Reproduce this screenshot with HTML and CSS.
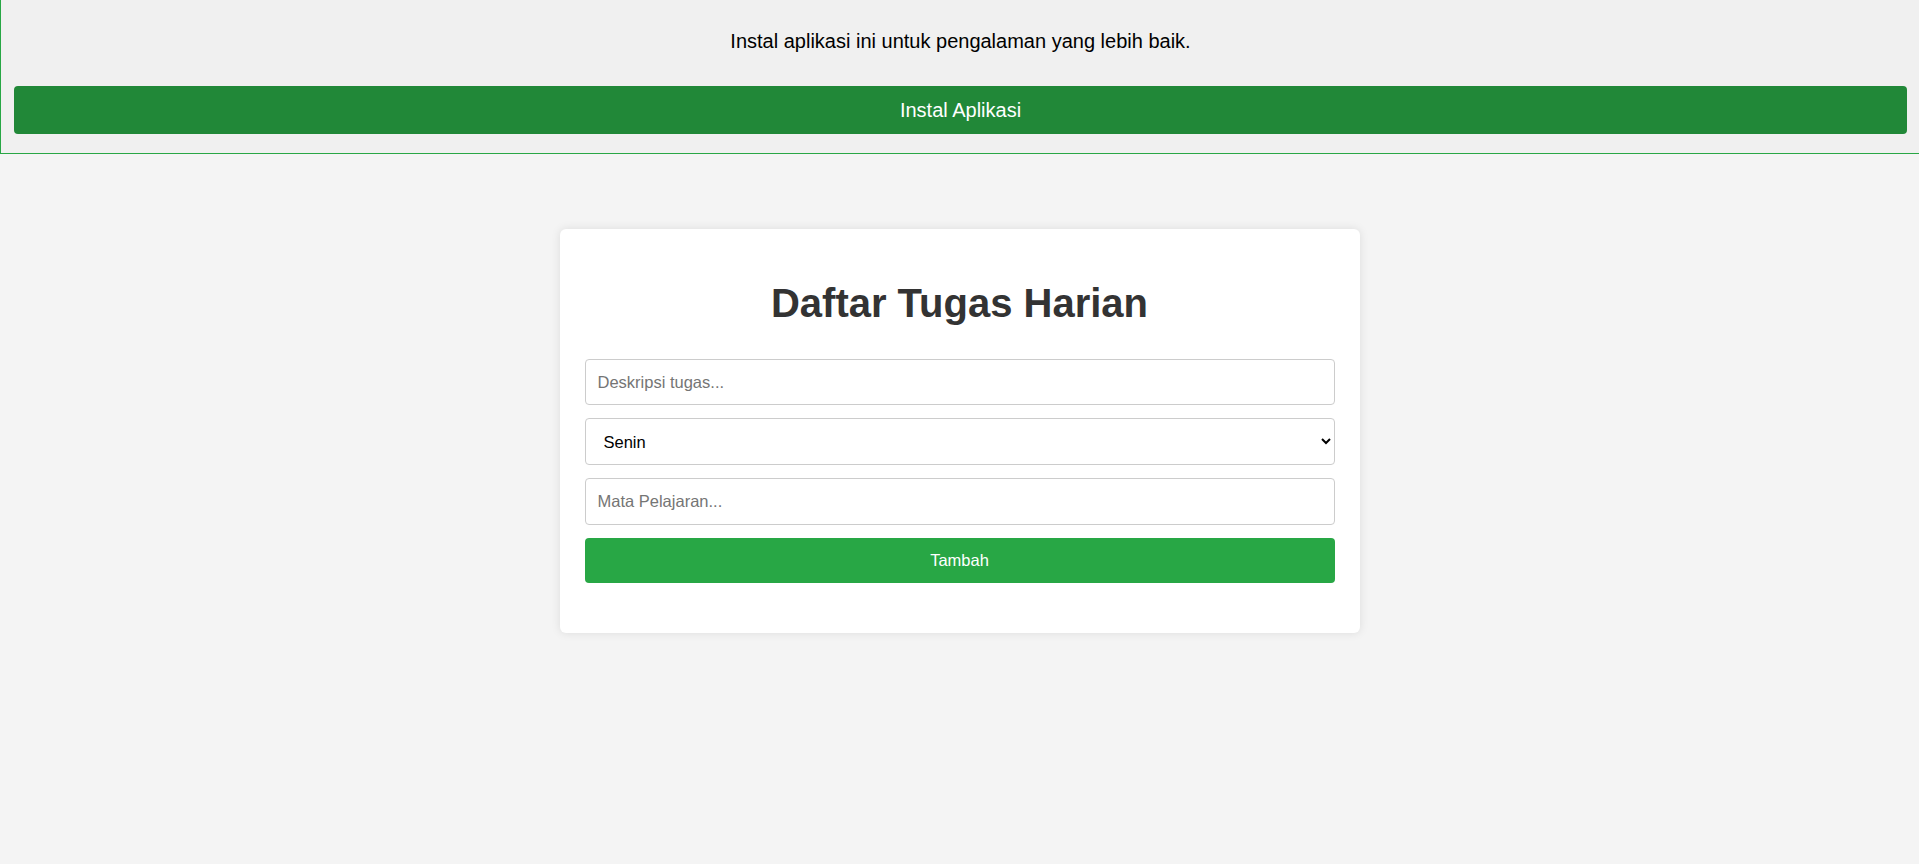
FILE: index.html
```html
<!DOCTYPE html>
<html lang="id">
<head>
<meta charset="utf-8">
<title>Daftar Tugas Harian</title>
<link rel="stylesheet" href="styles.css">
</head>
<body>
  <div class="install-banner">
    <p class="install-text">Instal aplikasi ini untuk pengalaman yang lebih baik.</p>
    <button class="install-btn" type="button">Instal Aplikasi</button>
  </div>

  <main class="container">
    <h1 class="title">Daftar Tugas Harian</h1>
    <form class="task-form">
      <input class="field field-desc" type="text" placeholder="Deskripsi tugas...">
      <select class="field field-select">
        <option>Senin</option>
        <option>Selasa</option>
        <option>Rabu</option>
        <option>Kamis</option>
        <option>Jumat</option>
        <option>Sabtu</option>
        <option>Minggu</option>
      </select>
      <input class="field field-subject" type="text" placeholder="Mata Pelajaran...">
      <button class="add-btn" type="button">Tambah</button>
    </form>
    <ul class="task-list"></ul>
  </main>
</body>
</html>
```

FILE: styles.css
```css
* {
  box-sizing: border-box;
}

html, body {
  margin: 0;
  padding: 0;
}

body {
  background: #f4f4f4;
  font-family: "Liberation Sans", Arial, sans-serif;
  color: #333;
  min-height: 864px;
}

.install-banner {
  background: #f0f0f0;
  border-left: 1px solid #28a745;
  border-bottom: 1px solid #28a745;
  padding: 30px 12px 19px 13px;
  text-align: center;
}

.install-text {
  margin: 0;
  font-size: 20px;
  line-height: 23px;
  color: #000;
}

.install-btn {
  display: block;
  width: 100%;
  height: 48px;
  margin-top: 33px;
  border: none;
  border-radius: 4px;
  background: #218838;
  color: #fff;
  font-family: "Liberation Sans", Arial, sans-serif;
  font-size: 20px;
  cursor: pointer;
}

.container {
  width: 800px;
  margin: 75px auto 0;
  background: #fff;
  border-radius: 6px;
  box-shadow: 0 0 10px rgba(0, 0, 0, 0.1);
  padding: 25px;
}

.title {
  margin: 26px 0 33px;
  font-size: 40px;
  line-height: 46px;
  text-align: center;
  color: #333;
  font-weight: bold;
}

.task-form {
  display: flex;
  flex-direction: column;
  gap: 13px;
}

.field {
  display: block;
  width: 100%;
  border: 1px solid #ccc;
  border-radius: 4px;
  background: #fff;
  font-family: "Liberation Sans", Arial, sans-serif;
  font-size: 16.5px;
  color: #000;
  padding: 0 12px;
}

.field::placeholder {
  color: #757575;
}

.field-desc {
  height: 46px;
}

.field-select {
  height: 47px;
  padding: 0 8px 0 14px;
}

.field-subject {
  height: 47px;
}

.add-btn {
  display: block;
  width: 100%;
  height: 45px;
  border: none;
  border-radius: 4px;
  background: #28a745;
  color: #fff;
  font-family: "Liberation Sans", Arial, sans-serif;
  font-size: 16.5px;
  cursor: pointer;
}

.task-list {
  list-style: none;
  margin: 25px 0 0;
  padding: 0;
}
```
